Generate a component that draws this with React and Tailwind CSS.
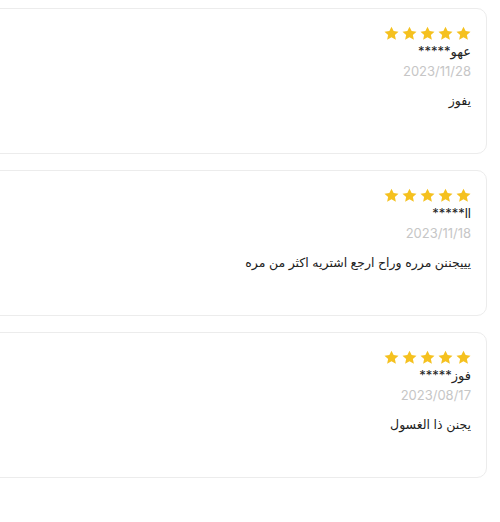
import React from "react";

const reviews = [
  { name: "عهو*****", date: "2023/11/28", text: "يفوز" },
  { name: "ll*****", date: "2023/11/18", text: "يييجننن مرره وراح ارجع اشتريه اكثر من مره" },
  { name: "فوز*****", date: "2023/08/17", text: "يجنن ذا الغسول" },
];

const Star = () => (
  <svg width="15" height="15" viewBox="0 0 24 24" className="fill-[#f5c11f]">
    <path d="M12 1l3.4 7.1 7.8.9-5.8 5.3 1.6 7.7L12 18.1 5 22l1.6-7.7L.8 9l7.8-.9z" />
  </svg>
);

const ReviewCard = ({ review }) => (
  <div className="h-[146px] rounded-[10px] border border-[#ececec] bg-white pt-[17px] pr-[15px] pl-4">
    <div className="flex gap-[3px]">
      {[0, 1, 2, 3, 4].map((i) => (
        <Star key={i} />
      ))}
    </div>
    <div className="mt-[1px] text-[13px] leading-[18px] text-[#222]">{review.name}</div>
    <div className="mt-[2px] text-[13px] leading-[18px] text-[#c6c6c6]">{review.date}</div>
    <div className="mt-[12px] text-[12.5px] leading-[18px] text-[#222]">{review.text}</div>
  </div>
);

export default function App() {
  return (
    <div
      dir="rtl"
      className="w-[500px] overflow-hidden bg-white pt-2 pr-[13px]"
      style={{ fontFamily: 'Inter, "DejaVu Sans", sans-serif' }}
    >
      <div className="-ml-6 flex flex-col gap-[16px]">
        {reviews.map((r, i) => (
          <ReviewCard key={i} review={r} />
        ))}
      </div>
      <div className="h-[43px]" />
    </div>
  );
}
